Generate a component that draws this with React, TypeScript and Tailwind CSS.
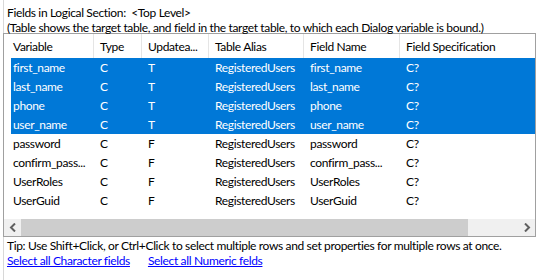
const columns = [
  { label: 'Variable', width: 'w-[90px]', pad: 'pl-[9px]' },
  { label: 'Type', width: 'w-[48px]', pad: 'pl-[6px]' },
  { label: 'Updatea...', width: 'w-[67px]', pad: 'pl-[6px]' },
  { label: 'Table Alias', width: 'w-[95px]', pad: 'pl-[6px]' },
  { label: 'Field Name', width: 'w-[96px]', pad: 'pl-[6px]' },
  { label: 'Field Specification', width: 'flex-1', pad: 'pl-[6px]' },
];

const rows = [
  ['first_name', 'C', 'T', 'RegisteredUsers', 'first_name', 'C?', true],
  ['last_name', 'C', 'T', 'RegisteredUsers', 'last_name', 'C?', true],
  ['phone', 'C', 'T', 'RegisteredUsers', 'phone', 'C?', true],
  ['user_name', 'C', 'T', 'RegisteredUsers', 'user_name', 'C?', true],
  ['password', 'C', 'F', 'RegisteredUsers', 'password', 'C?', false],
  ['confirm_pass...', 'C', 'F', 'RegisteredUsers', 'confirm_pass...', 'C?', false],
  ['UserRoles', 'C', 'F', 'RegisteredUsers', 'UserRoles', 'C?', false],
  ['UserGuid', 'C', 'F', 'RegisteredUsers', 'UserGuid', 'C?', false],
] as const;

function ScrollBar() {
  return (
    <div className="flex h-[17px] bg-[#f0f0f0]">
      <div className="flex w-[17px] items-center justify-center">
        <svg width="8" height="9" viewBox="0 0 8 9">
          <path d="M6 0.5 L2 4.5 L6 8.5" fill="none" stroke="#606060" strokeWidth="2" />
        </svg>
      </div>
      <div className="w-[447px] bg-[#cdcdcd]" />
      <div className="flex-1" />
      <div className="flex w-[17px] items-center justify-center">
        <svg width="8" height="9" viewBox="0 0 8 9">
          <path d="M2 0.5 L6 4.5 L2 8.5" fill="none" stroke="#606060" strokeWidth="2" />
        </svg>
      </div>
    </div>
  );
}

export default function App() {
  return (
    <div
      className="h-[280px] w-[537px] overflow-hidden bg-white pl-[3px] text-[12px] leading-[15px] tracking-[-0.35px] text-black"
      style={{ fontFamily: 'Lato, "Liberation Sans", sans-serif' }}
    >
      <div className="h-full border-l border-[#d8d8d8] pt-[5px]">
        <div className="whitespace-nowrap pl-[3px]">Fields in Logical Section:&nbsp; &lt;Top Level&gt;</div>
        <div className="whitespace-nowrap pl-[3px]">
          (Table shows the target table, and field in the target table, to which each Dialog variable is bound.)
        </div>
        <div className="-ml-px mr-[1px] mt-[-2px] border border-[#a0a0a0]">
          <div className="flex h-[24px] items-center">
            {columns.map((c, i) => (
              <div
                key={c.label}
                className={`${c.width} ${c.pad} flex h-full items-center whitespace-nowrap ${
                  i < columns.length - 1 ? 'border-r border-[#e5e5e5]' : ''
                }`}
              >
                {c.label}
              </div>
            ))}
          </div>
          <div className="h-[161px]">
            {rows.map(r => (
              <div
                key={r[0]}
                className={`ml-[7px] flex h-[19px] items-center whitespace-nowrap ${
                  r[6] ? 'bg-[#0078d7] text-white' : ''
                }`}
              >
                <div className="w-[83px] pl-[2px]">{r[0]}</div>
                <div className="w-[48px] pl-[6px]">{r[1]}</div>
                <div className="w-[67px] pl-[6px]">{r[2]}</div>
                <div className="w-[95px] pl-[6px]">{r[3]}</div>
                <div className="w-[96px] pl-[6px]">{r[4]}</div>
                <div className="flex-1 pl-[6px]">{r[5]}</div>
              </div>
            ))}
          </div>
          <ScrollBar />
        </div>
        <div className="mt-[1px] whitespace-nowrap pl-[3px]">
          Tip: Use Shift+Click, or Ctrl+Click to select multiple rows and set properties for multiple rows at once.
        </div>
        <div className="flex gap-[18px] pl-[3px] text-[#0000ff]">
          <a className="underline">Select all Character fields</a>
          <a className="underline">Select all Numeric felds</a>
        </div>
      </div>
    </div>
  );
}
